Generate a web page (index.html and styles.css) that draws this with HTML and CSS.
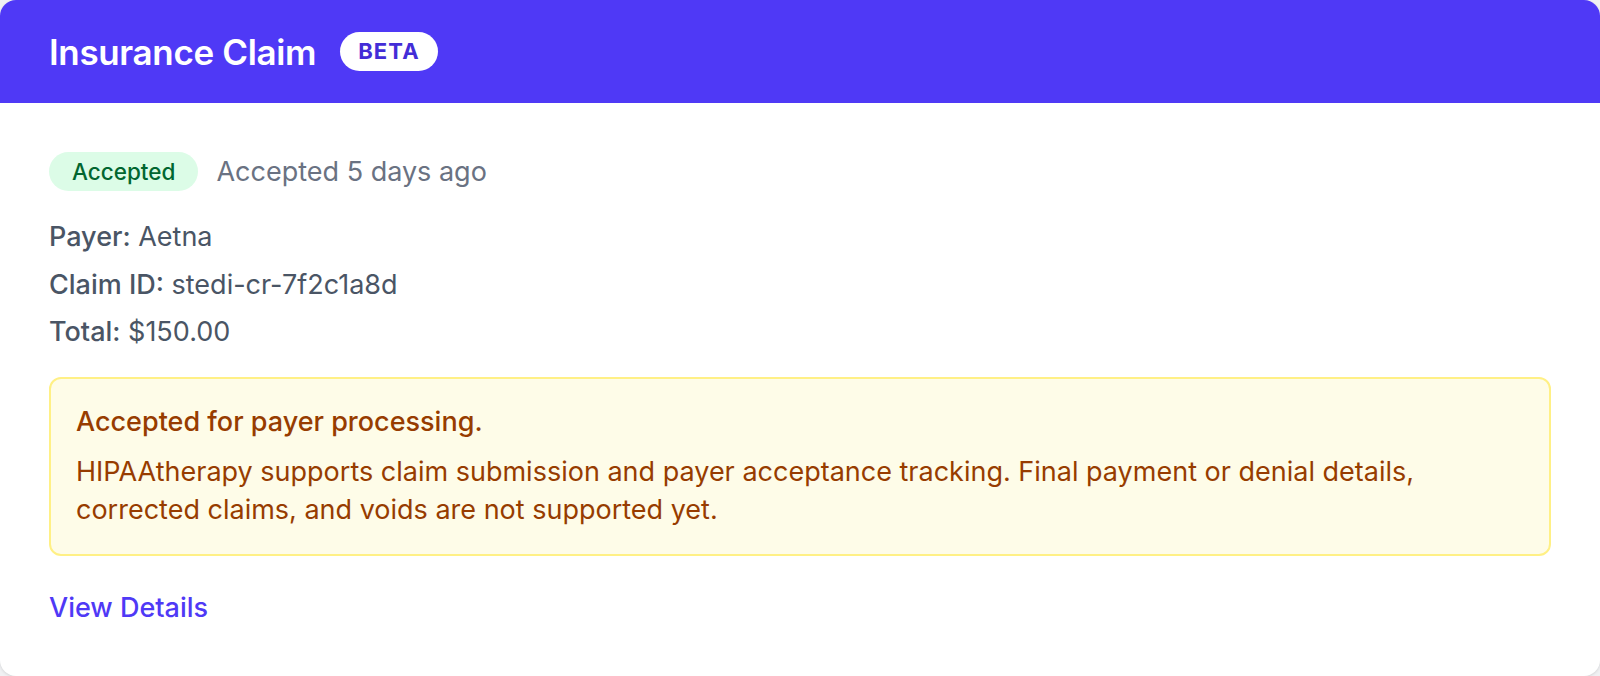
FILE: index.html
```html
<!DOCTYPE html>
<html lang="en">
<head>
<meta charset="utf-8">
<link rel="stylesheet" href="styles.css">
</head>
<body>
<div class="card">
  <header class="card-header">
    <h1 class="title">Insurance Claim</h1>
    <span class="beta">BETA</span>
  </header>
  <div class="card-body">
    <div class="status-row">
      <span class="pill">Accepted</span>
      <span class="status-time">Accepted 5 days ago</span>
    </div>
    <div class="details">
      <p class="detail"><span class="label">Payer:</span> Aetna</p>
      <p class="detail"><span class="label">Claim ID:</span> stedi-cr-7f2c1a8d</p>
      <p class="detail"><span class="label">Total:</span> $150.00</p>
    </div>
    <div class="notice">
      <p class="notice-title">Accepted for payer processing.</p>
      <p class="notice-text">HIPAAtherapy supports claim submission and payer acceptance tracking. Final payment or denial details, corrected claims, and voids are not supported yet.</p>
    </div>
    <a class="link" href="#">View Details</a>
  </div>
</div>
</body>
</html>
```
FILE: styles.css
```css
* { box-sizing: border-box; }
html, body { margin: 0; padding: 0; }
body {
  background: #f0f1f3;
  font-family: Inter, "Noto Sans", sans-serif;
  height: 676px;
  overflow: hidden;
}
.card {
  background: #fff;
  border-radius: 16px;
  overflow: hidden;
  height: 676px;
  box-shadow: 0 1px 3px rgba(0,0,0,0.12);
}
.card-header {
  background: #4f39f6;
  height: 103px;
  display: flex;
  align-items: center;
  padding: 0 49px;
  gap: 24px;
}
.title {
  margin: 0;
  color: #fff;
  font-size: 35px;
  font-weight: 600;
  letter-spacing: -0.01em;
}
.beta {
  background: #fff;
  color: #432dd7;
  font-size: 22px;
  font-weight: 700;
  letter-spacing: 0.05em;
  padding: 0 18px;
  height: 39px;
  line-height: 39px;
  border-radius: 20px;
}
.card-body {
  padding: 49px 49px 0 49px;
}
.status-row {
  display: flex;
  align-items: center;
  gap: 18px;
  height: 39px;
}
.pill {
  background: #dcfce7;
  color: #016630;
  font-size: 22.5px;
  font-weight: 500;
  height: 39px;
  line-height: 39px;
  padding: 0 23px;
  border-radius: 20px;
}
.status-time {
  color: #6a7282;
  font-size: 27px;
}
.details { margin-top: 22px; }
.detail {
  margin: 0;
  color: #4a5565;
  font-size: 27px;
  line-height: 47.5px;
}
.label { font-weight: 500; }
.notice {
  margin-top: 21px;
  background: #fefce8;
  border: 2px solid #fff085;
  border-radius: 12px;
  padding: 24px 25px 25px 25px;
}
.notice-title {
  margin: 0;
  color: #973c00;
  font-size: 27px;
  font-weight: 500;
  line-height: 38px;
}
.notice-text {
  margin: 12px 0 0 0;
  color: #973c00;
  font-size: 27px;
  line-height: 38px;
}
.link {
  display: inline-block;
  margin-top: 35px;
  color: #4f39f6;
  font-size: 27px;
  font-weight: 500;
  text-decoration: none;
}
```
